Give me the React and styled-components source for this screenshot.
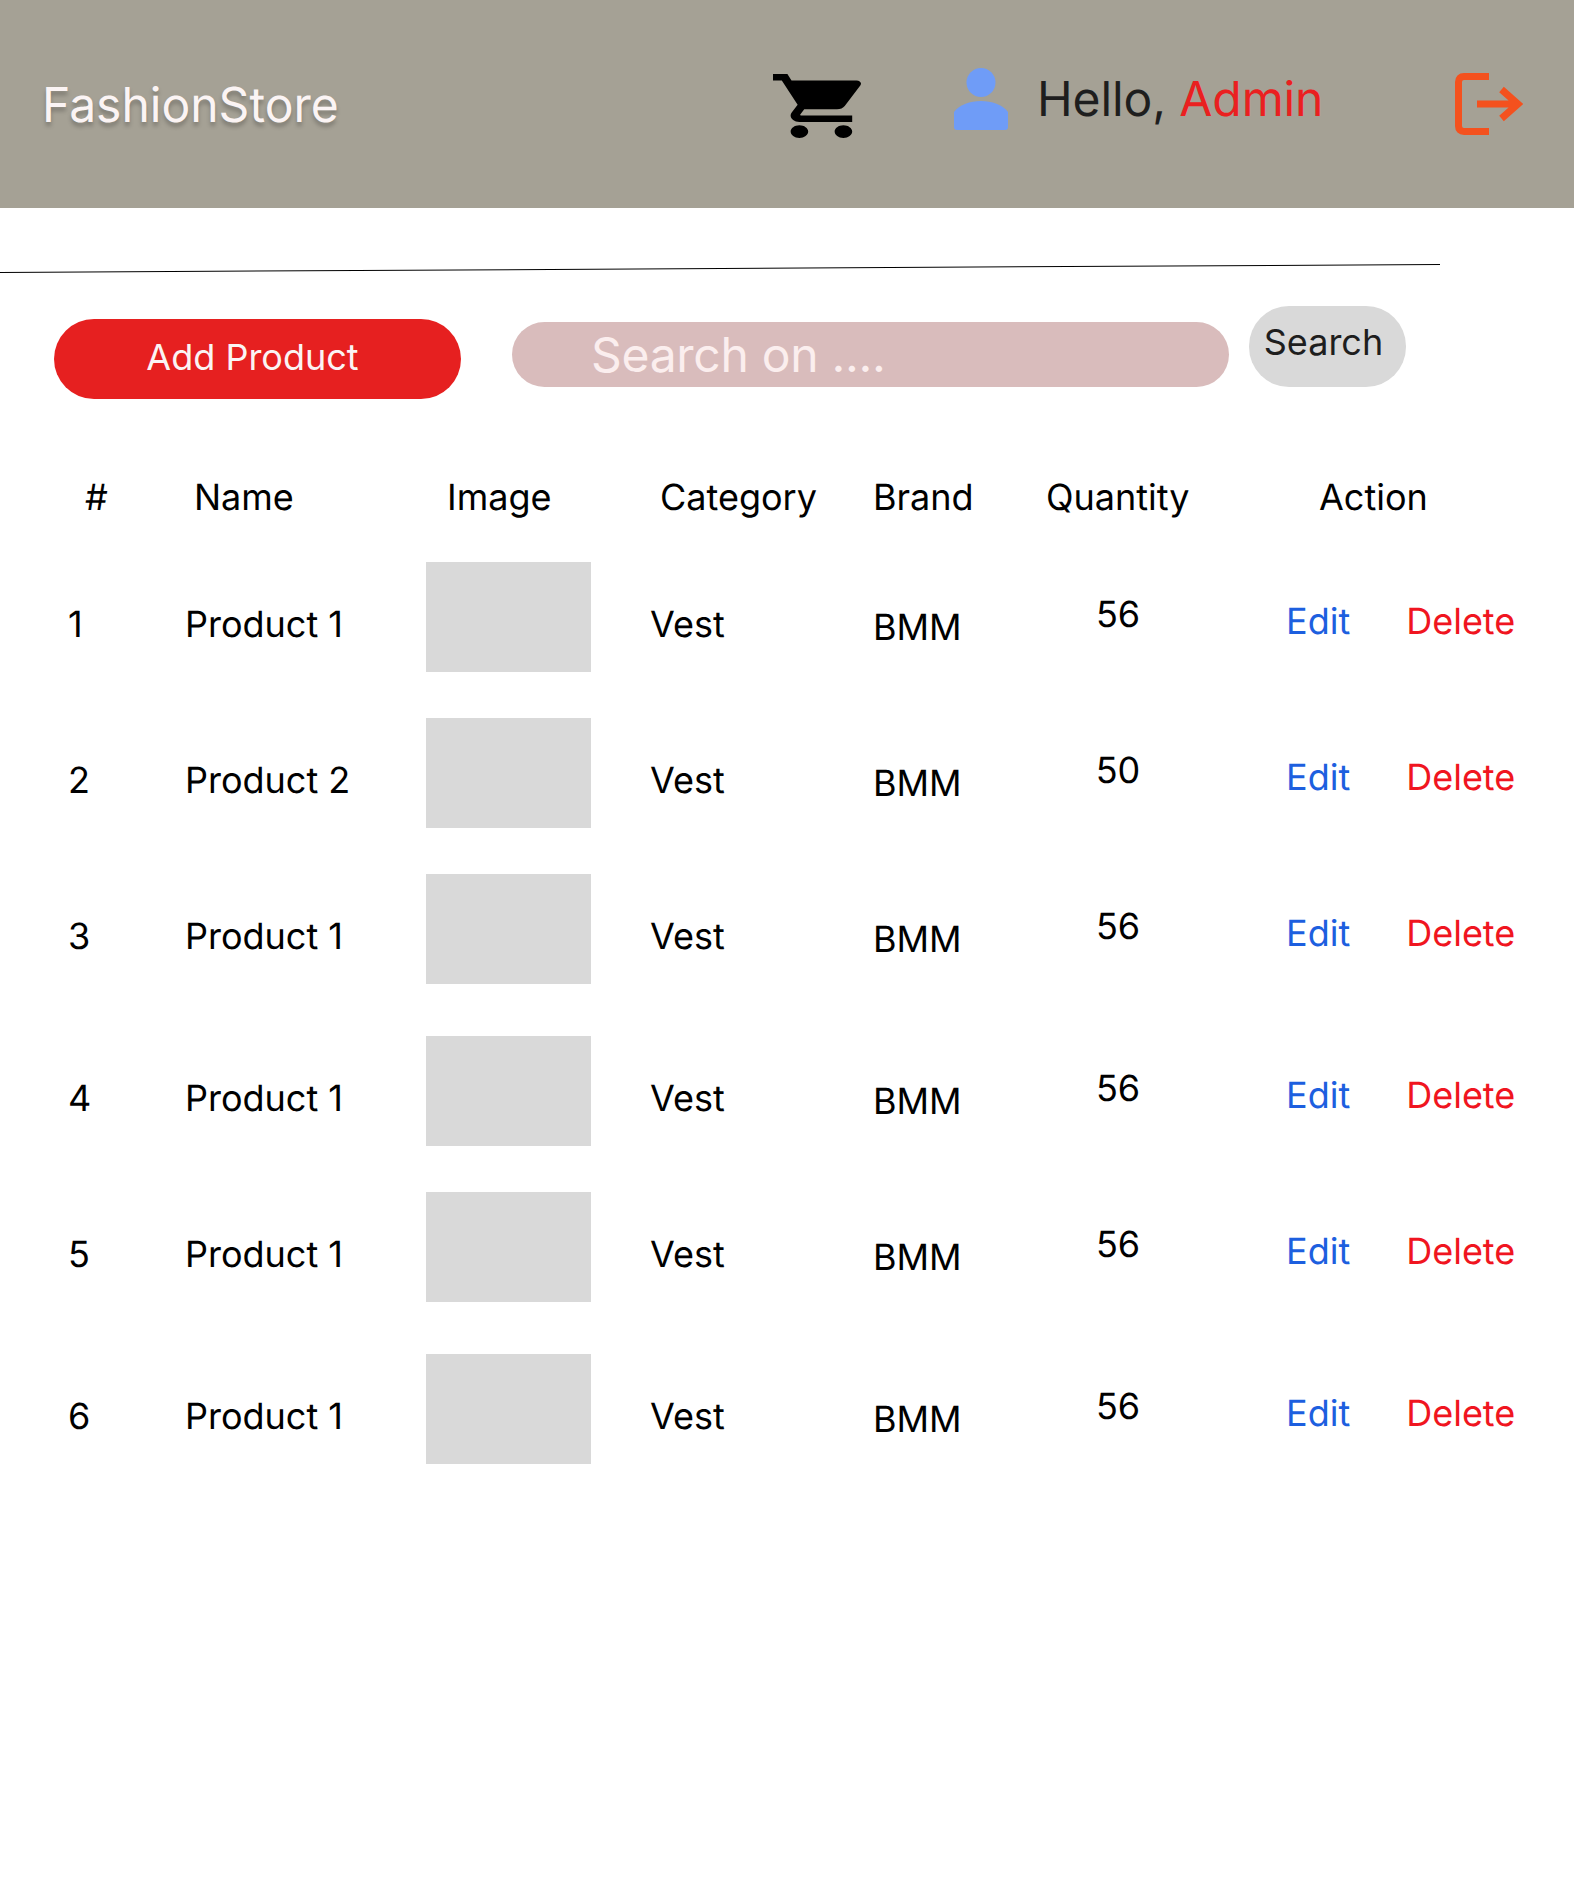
import React from "react";
import styled, { createGlobalStyle } from "styled-components";

const GlobalStyle = createGlobalStyle`
  html, body {
    margin: 0;
    padding: 0;
    background: #fff;
    font-family: Inter, "Liberation Sans", sans-serif;
    text-rendering: geometricPrecision;
  }
`;

const Page = styled.div`
  width: 1574px;
  height: 1884px;
  overflow: hidden;
  color: #000;
`;

const Header = styled.header`
  height: 208px;
  background: #a5a195;
  display: flex;
  align-items: flex-start;
`;

const Brand = styled.div`
  width: 773px;
  padding: 76px 0 0 42px;
  box-sizing: border-box;
  font-size: 48px;
  line-height: 58px;
  color: #fbf4f4;
  text-shadow: 0 4px 4px rgba(0, 0, 0, 0.25);
`;

const CartIcon = styled.svg`
  width: 88px;
  height: 64px;
  margin-top: 74px;
`;

const UserIcon = styled.svg`
  width: 54px;
  height: 62px;
  margin: 68px 0 0 93px;
`;

const Greeting = styled.div`
  width: 447px;
  padding: 70px 0 0 29px;
  box-sizing: border-box;
  font-size: 48px;
  line-height: 58px;
  letter-spacing: -0.1px;
  color: #1e1e1e;

  span {
    color: #ea2020;
  }
`;

const LogoutIcon = styled.svg`
  width: 68px;
  height: 62px;
  margin-top: 73px;
`;

const Rule = styled.div`
  width: 1440px;
  height: 1px;
  margin-top: 64px;
  background: #000;
  transform-origin: left center;
  transform: rotate(-0.32deg);
`;

const Toolbar = styled.div`
  display: flex;
  align-items: flex-start;
  margin-top: 33px;
  padding-left: 54px;
  height: 81px;
`;

const AddButton = styled.button`
  width: 407px;
  height: 80px;
  margin-top: 13px;
  padding: 0 10px 4px 0;
  border: 0;
  border-radius: 40px;
  background: #e62020;
  color: #fbf4f4;
  font: 36px Inter, sans-serif;
`;

const SearchInput = styled.input`
  width: 717px;
  height: 65px;
  margin: 16px 0 0 51px;
  padding: 0 0 0 79px;
  box-sizing: border-box;
  border: 0;
  border-radius: 33px;
  background: #d9bcbc;
  font: 48px Inter, sans-serif;
  letter-spacing: -0.3px;

  &::placeholder {
    color: #fbeeee;
    opacity: 1;
  }
`;

const SearchButton = styled.button`
  width: 157px;
  height: 81px;
  margin-left: 20px;
  padding: 0 8px 10px 0;
  border: 0;
  border-radius: 40px;
  background: #d9d9d9;
  color: #1e1e1e;
  font: 36px Inter, sans-serif;
`;

const Table = styled.div`
  margin-top: 88px;
  padding-left: 68px;
`;

const columns = "117px 241px 224px 223px 173px 142px 240px";

const HeadRow = styled.div`
  display: grid;
  grid-template-columns: ${columns};
  height: 87px;
  font-size: 36px;
  line-height: 44px;
`;

const HeadCell = styled.div`
  padding-left: ${(p) => p.$indent || 0}px;
  text-align: ${(p) => p.$align || "left"};
  white-space: nowrap;
`;

const Row = styled.div`
  display: grid;
  grid-template-columns: ${columns};
  height: 110px;
  margin-top: ${(p) => p.$gap}px;
  font-size: 36px;
  line-height: 44px;
`;

const Cell = styled.div`
  padding-top: ${(p) => p.$top}px;
  padding-left: ${(p) => p.$indent || 0}px;
  text-align: ${(p) => p.$align || "left"};
  white-space: nowrap;
`;

const Thumb = styled.div`
  width: 165px;
  height: 110px;
  background: #d9d9d9;
`;

const Actions = styled.div`
  display: flex;
  gap: 56px;
  padding: 37px 0 0 98px;
`;

const EditLink = styled.a`
  color: #1d5fdf;
`;

const DeleteLink = styled.a`
  color: #f01520;
`;

const rows = [
  { id: 1, name: "Product 1", qty: 56, gap: 0 },
  { id: 2, name: "Product 2", qty: 50, gap: 46 },
  { id: 3, name: "Product 1", qty: 56, gap: 46 },
  { id: 4, name: "Product 1", qty: 56, gap: 52 },
  { id: 5, name: "Product 1", qty: 56, gap: 46 },
  { id: 6, name: "Product 1", qty: 56, gap: 52 },
];

export default function App() {
  return (
    <Page>
      <GlobalStyle />
      <Header>
        <Brand>FashionStore</Brand>
        <CartIcon viewBox="1 2 20 20" preserveAspectRatio="none">
          <path d="M7 18c-1.1 0-1.99.9-1.99 2S5.9 22 7 22s2-.9 2-2-.9-2-2-2zM1 2v2h2l3.6 7.59-1.35 2.45c-.16.28-.25.61-.25.96 0 1.1.9 2 2 2h12v-2H7.42c-.14 0-.25-.11-.25-.25l.03-.12.9-1.63h7.45c.75 0 1.41-.41 1.75-1.03l3.58-6.49c.08-.14.12-.31.12-.48 0-.55-.45-1-1-1H5.21l-.94-2H1zm16 16c-1.1 0-1.99.9-1.99 2s.89 2 1.99 2 2-.9 2-2-.9-2-2-2z" />
        </CartIcon>
        <UserIcon viewBox="0 0 54 62" fill="#6f9cf7">
          <circle cx="27" cy="14.500" r="14.500" />
          <path d="M0 44C6 36.500 16 33 27 33s21 3.500 27 11v15c0 2-1 3-3 3H3c-2 0-3-1-3-3z" />
        </UserIcon>
        <Greeting>
          Hello, <span>Admin</span>
        </Greeting>
        <LogoutIcon viewBox="0 0 68 62" fill="none" stroke="#f4511e" strokeWidth="7">
          <path d="M34 3.500H9c-3.500 0-5.500 2-5.500 5.500v44c0 3.500 2 5.500 5.500 5.500h25" />
          <path d="M22 31h40M46.500 16.500L63 31 46.500 45.500" />
        </LogoutIcon>
      </Header>
      <Rule />
      <Toolbar>
        <AddButton>Add Product</AddButton>
        <SearchInput placeholder="Search on ...." />
        <SearchButton>Search</SearchButton>
      </Toolbar>
      <Table>
        <HeadRow>
          <HeadCell $indent={17}>#</HeadCell>
          <HeadCell $indent={9}>Name</HeadCell>
          <HeadCell $indent={21}>Image</HeadCell>
          <HeadCell $indent={10}>Category</HeadCell>
          <HeadCell>Brand</HeadCell>
          <HeadCell $align="center">Quantity</HeadCell>
          <HeadCell $indent={131}>Action</HeadCell>
        </HeadRow>
        {rows.map((r) => (
          <Row key={r.id} $gap={r.gap}>
            <Cell $top={40}>{r.id}</Cell>
            <Cell $top={40}>{r.name}</Cell>
            <Thumb />
            <Cell $top={40}>Vest</Cell>
            <Cell $top={43}>BMM</Cell>
            <Cell $top={30} $indent={2} $align="center">{r.qty}</Cell>
            <Actions>
              <EditLink>Edit</EditLink>
              <DeleteLink>Delete</DeleteLink>
            </Actions>
          </Row>
        ))}
      </Table>
    </Page>
  );
}
